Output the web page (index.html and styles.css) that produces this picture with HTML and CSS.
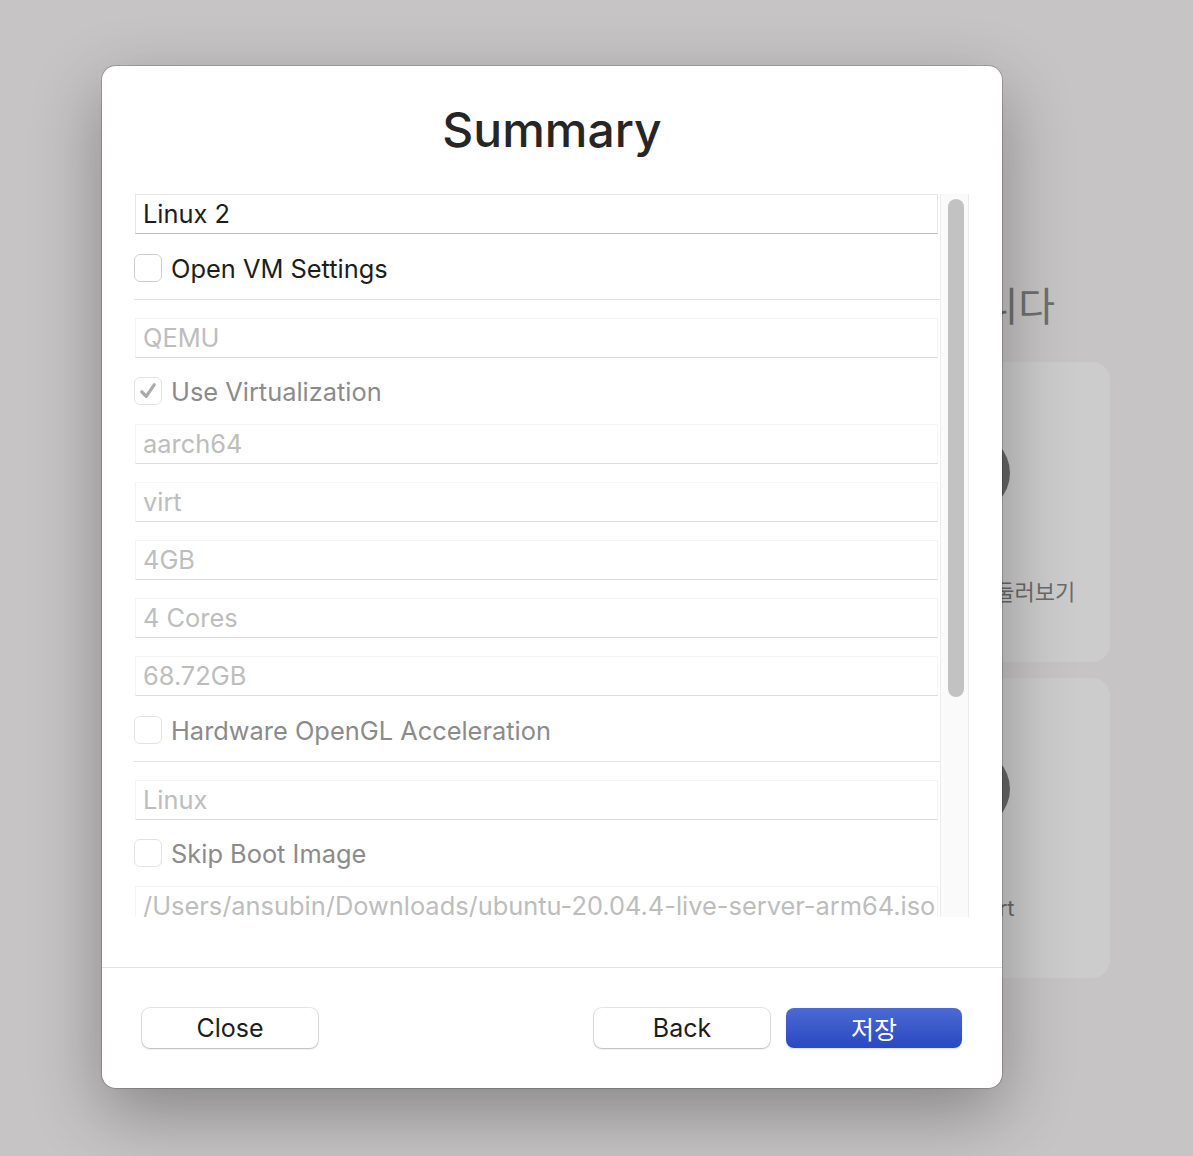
FILE: index.html
```html
<!DOCTYPE html>
<html lang="ko">
<head>
    <meta charset="utf-8">
    <title>Summary</title>
    <link rel="stylesheet" href="styles.css">
</head>
<body>

    <!-- welcome window behind the sheet -->
    <div class="welcome">
        <h1 class="welcome-title">UTM에 오신 것을 환영합니다</h1>
        <div class="tiles">
            <div class="tile">
                <div class="tile-icon"></div>
                <div class="tile-label">새 가상 머신 생성</div>
            </div>
            <div class="tile">
                <div class="tile-icon"></div>
                <div class="tile-label">UTM 갤러리 둘러보기</div>
            </div>
            <div class="tile">
                <div class="tile-icon"></div>
                <div class="tile-label">사용자 가이드</div>
            </div>
            <div class="tile">
                <div class="tile-icon"></div>
                <div class="tile-label">Support</div>
            </div>
        </div>
    </div>

    <!-- summary sheet -->
    <div class="dialog">
        <h2 class="dialog-title">Summary</h2>

        <div class="scroll">
            <div class="form">
                <div class="field active">Linux 2</div>
                <div class="check-row enabled sep">
                    <span class="box"></span>
                    <span>Open VM Settings</span>
                </div>

                <div class="field">QEMU</div>
                <div class="check-row">
                    <span class="box checked">
                        <svg width="22" height="22" viewBox="0 0 22 22"><path d="M4.8 11.8 L9.2 16.4 L17.2 4.8" fill="none" stroke="#ababab" stroke-width="3.2" stroke-linecap="round" stroke-linejoin="round"/></svg>
                    </span>
                    <span>Use Virtualization</span>
                </div>
                <div class="field">aarch64</div>
                <div class="field">virt</div>
                <div class="field">4GB</div>
                <div class="field">4 Cores</div>
                <div class="field">68.72GB</div>
                <div class="check-row sep">
                    <span class="box"></span>
                    <span>Hardware OpenGL Acceleration</span>
                </div>

                <div class="field">Linux</div>
                <div class="check-row">
                    <span class="box"></span>
                    <span>Skip Boot Image</span>
                </div>
                <div class="field">/Users/ansubin/Downloads/ubuntu-20.04.4-live-server-arm64.iso</div>
            </div>
            <div class="scrollbar">
                <div class="thumb"></div>
            </div>
        </div>

        <div class="footer">
            <button class="btn">Close</button>
            <div class="spacer"></div>
            <button class="btn">Back</button>
            <button class="btn primary">저장</button>
        </div>
    </div>

</body>
</html>
```

FILE: styles.css
```css
* {
    margin: 0;
    padding: 0;
    box-sizing: border-box;
}

body {
    width: 1193px;
    height: 1156px;
    overflow: hidden;
    background: #c6c4c4;
    font-family: "Inter", "Noto Sans CJK KR", sans-serif;
}

        /* Welcome window (behind) */

.welcome {
    display: flex;
    flex-direction: column;
    align-items: flex-end;
    padding: 282px 83px 0 0;
}

.welcome-title {
    font-size: 40px;
    font-weight: 400;
    line-height: 50px;
    color: #6f6f6f;
    margin: 0 55px 30px 0;
}

.tiles {
    display: grid;
    grid-template-columns: 280px 280px;
    grid-auto-rows: 300px;
    gap: 16px;
}

.tile {
    background: #cdcccc;
    border-radius: 18px;
    display: flex;
    flex-direction: column;
    align-items: center;
}

.tile-icon {
    width: 80px;
    height: 80px;
    margin-top: 71px;
    border-radius: 50%;
    background: #686868;
}

.tile-label {
    margin-top: 67px;
    font-size: 22px;
    line-height: 24px;
    color: #6a6a6a;
    white-space: nowrap;
    padding-left: 6px;
}

        /* Summary sheet */

.dialog {
    position: absolute;
    left: 102px;
    top: 66px;
    width: 900px;
    height: 1022px;
    background: #fff;
    border-radius: 14px;
    box-shadow: 0 0 0 1px rgba(0, 0, 0, .18), 0 24px 70px rgba(0, 0, 0, .32);
    display: flex;
    flex-direction: column;
}

.dialog-title {
    text-align: center;
    font-size: 48px;
    font-weight: 500;
    line-height: 60px;
    color: #262626;
    margin: 34px 0 34px;
}

.scroll {
    display: flex;
    height: 723px;
    margin: 0 32px;
    overflow: hidden;
}

.form {
    flex: 1;
    overflow: hidden;
}

.field {
    height: 40px;
    margin: 0 2px 18px 1px;
    padding: 0 7px;
    border: 1px solid #f4f4f4;
    border-bottom-color: #dcdcdc;
    font-size: 25.4px;
    line-height: 38px;
    color: #bdbdbd;
    white-space: nowrap;
    overflow: hidden;
}

.field.active {
    color: #1d1d1d;
    border-color: #e6e6e6;
    border-bottom-color: #bcbcbc;
}

.check-row {
    display: flex;
    align-items: center;
    gap: 9px;
    height: 30px;
    margin-bottom: 18px;
    font-size: 25.4px;
    color: #8b8b8b;
}

.check-row.enabled {
    color: #1d1d1d;
}

.check-row.sep {
    height: 48px;
    padding-bottom: 15px;
    border-bottom: 1px solid #e3e3e3;
}

.box {
    flex: none;
    width: 28px;
    height: 28px;
    border: 1px solid #e3e3e3;
    border-radius: 6px;
    background: #fff;
    display: flex;
    align-items: center;
    justify-content: center;
}

.check-row.enabled .box {
    border-color: #cdcdcd;
}

.scrollbar {
    width: 29px;
    margin-right: 1px;
    background: #fafafa;
    border-left: 1px solid #ececec;
    border-right: 1px solid #ececec;
}

.thumb {
    width: 16px;
    height: 498px;
    margin: 5px 0 0 7px;
    border-radius: 8px;
    background: #c2c2c2;
}

        /* Footer buttons */

.footer {
    display: flex;
    gap: 16px;
    margin-top: 50px;
    padding: 40px 40px 0;
    border-top: 1px solid #e3e3e3;
}

.spacer {
    flex: 1;
}

.btn {
    width: 176px;
    height: 40px;
    border: none;
    border-radius: 8px;
    background: #fff;
    box-shadow: 0 0 0 1px rgba(0, 0, 0, .1), 0 1px 2px rgba(0, 0, 0, .2);
    font-family: "Inter", "Noto Sans CJK KR", sans-serif;
    font-size: 25px;
    color: #1d1d1d;
}

.btn.primary {
    background: linear-gradient(#4b6ad3, #2a48c1);
    box-shadow: 0 1px 2px rgba(0, 0, 0, .15);
    color: #fff;
}
```
